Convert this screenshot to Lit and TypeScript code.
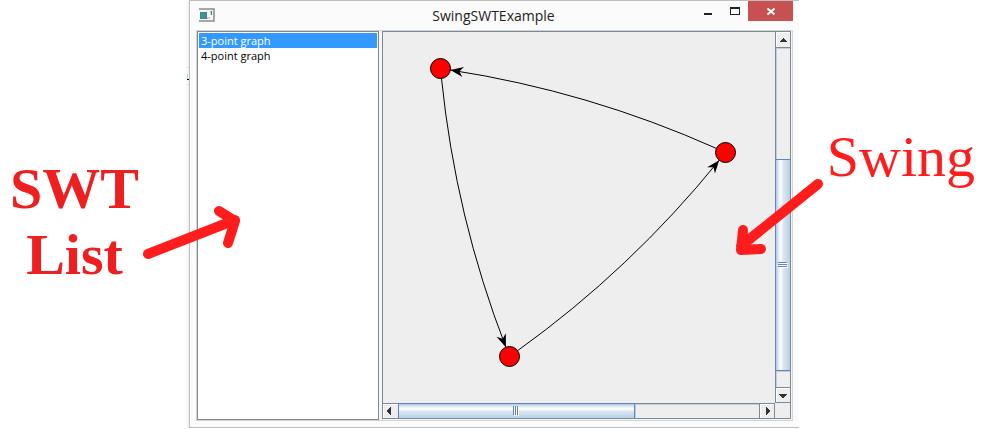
import { LitElement, html, svg, css } from "lit";
import { customElement, property, state } from "lit/decorators.js";

type Point = [number, number];
type Edge = { from: Point; bend: Point; to: Point; angle: number };
type Graph = { name: string; nodes: Point[]; edges: Edge[] };

/** Directed edge between two node rims, bowed to the right of its direction. */
function edge(a: Point, b: Point): Edge {
  const dx = b[0] - a[0];
  const dy = b[1] - a[1];
  const len = Math.hypot(dx, dy);
  const bow = 20;
  const bend: Point = [
    (a[0] + b[0]) / 2 - (dy / len) * bow,
    (a[1] + b[1]) / 2 + (dx / len) * bow,
  ];
  const toward = (p: Point, r: number): Point => {
    const d = Math.hypot(bend[0] - p[0], bend[1] - p[1]);
    return [p[0] + ((bend[0] - p[0]) / d) * r, p[1] + ((bend[1] - p[1]) / d) * r];
  };
  return {
    from: toward(a, 10),
    bend,
    to: toward(b, 10),
    angle: (Math.atan2(b[1] - bend[1], b[0] - bend[0]) * 180) / Math.PI,
  };
}

function ring(name: string, nodes: Point[]): Graph {
  return { name, nodes, edges: nodes.map((n, i) => edge(n, nodes[(i + 1) % nodes.length])) };
}

const graphs: Graph[] = [
  ring("3-point graph", [[57.5, 36.5], [126.5, 324.5], [342.5, 120.5]]),
  ring("4-point graph", [[57.5, 36.5], [126.5, 324.5], [300.5, 300.5], [342.5, 120.5]]),
];

@customElement("scroll-bar")
class ScrollBar extends LitElement {
  @property({ reflect: true }) direction = "vertical";

  static styles = css`
    :host { display: flex; min-width: 0; min-height: 0; background: #eee; }
    :host([direction="vertical"]) { flex-direction: column; border: solid #7a8a99; border-width: 0 0 1px 1px; }
    :host([direction="horizontal"]) { border: solid #7a8a99; border-width: 1px 1px 0 0; }
    .arrow {
      flex: none; width: 14px; height: 14px; padding: 0; border: 0;
      background: #eee; box-shadow: inset 1px 1px #fff; display: block;
    }
    :host([direction="vertical"]) .first { height: 15px; }
    :host([direction="horizontal"]) .first { width: 15px; }
    .arrow svg { display: block; }
    .track { flex: 1; display: flex; min-width: 0; min-height: 0; }
    .vertical { flex-direction: column; border: solid #7a8a99; border-width: 1px 0; box-shadow: inset 1px 1px #b8cfe5; }
    .horizontal { border: solid #7a8a99; border-width: 0 1px; box-shadow: inset 1px 1px #b8cfe5; }
    .thumb { box-sizing: border-box; display: flex; align-items: center; justify-content: center; }
    .vertical .before { flex: 112; }
    .vertical .thumb {
      flex: 211; border: solid #6382bf; border-width: 1px 0 1px 1px; margin-left: -1px;
      background: linear-gradient(90deg, #b8cfe5 0 1px, #dde8f3 2px, #fff 5px, #dde8f3 7px, #b8cfe5);
    }
    .vertical .after { flex: 16; box-shadow: inset 1px 1px #b8cfe5; }
    .horizontal .thumb {
      flex: 236; border: solid #6382bf; border-width: 1px 1px 0 1px; margin: -1px 0 0 -1px;
      background: linear-gradient(#b8cfe5 0 1px, #dde8f3 2px, #fff 5px, #dde8f3 7px, #b8cfe5);
    }
    .horizontal .after { flex: 125; box-shadow: inset 1px 1px #b8cfe5; }
  `;

  render() {
    const vertical = this.direction === "vertical";
    const arrows = vertical
      ? ["M7 5h1v1h1v1h1v1h1v1H4V8h1V7h1V6h1z", "M3 6h8v1h-1v1H9v1H8v1H6V9H5V8H4V7H3z"]
      : ["M8 3v8H7v-1H6V9H5V8H4V6h1V5h1V4h1V3z", "M6 3h1v1h1v1h1v1h1v2H9v1H8v1H7v1H6z"];
    return html`
      <button class="arrow first" aria-label=${vertical ? "Up" : "Left"}>
        <svg width="14" height="14" fill="#333"><path d=${arrows[0]} /></svg>
      </button>
      <div class="track ${this.direction}">
        ${vertical ? html`<div class="before"></div>` : ""}
        <div class="thumb">
          ${vertical
            ? html`<svg width="10" height="6"><path d="M1 1.5h9M1 3.5h9M1 5.5h9" stroke="#fff" /><path d="M0 .5h9M0 2.5h9M0 4.5h9" stroke="#6382bf" /></svg>`
            : html`<svg width="6" height="10"><path d="M1.5 1v9M3.5 1v9M5.5 1v9" stroke="#fff" /><path d="M.5 0v9M2.5 0v9M4.5 0v9" stroke="#6382bf" /></svg>`}
        </div>
        <div class="after"></div>
      </div>
      <button class="arrow" aria-label=${vertical ? "Down" : "Right"}>
        <svg width="14" height="14" fill="#333"><path d=${arrows[1]} /></svg>
      </button>
    `;
  }
}

@customElement("app-root")
class AppRoot extends LitElement {
  @state() private selected = 0;

  static styles = css`
    :host { display: block; background: #fff; font-family: "Open Sans", "Noto Sans", sans-serif; }
    .page { position: relative; display: grid; grid-template-columns: 189px minmax(0, 1fr) 201px; }
    .note {
      font: 58px/66px "Liberation Serif", serif; color: #ff1c1c;
      text-align: center; margin: 0;
    }
    .swt { font-weight: bold; color: #ed1f1f; padding: 156px 40px 0 0; }
    .swing { padding: 124px 0 0 3px; }
    .pointer { position: absolute; top: 0; fill: none; stroke: #ff1c1c; stroke-width: 10; stroke-linecap: round; stroke-linejoin: round; pointer-events: none; }
    .left { left: 139px; }
    .right { right: 171px; }
    .sliver { position: absolute; left: 187px; top: 67px; }
    .window {
      border: solid #bebebe; border-width: 1px 0 1px 1px; background: #fbfbfb;
      padding: 0 6px 6px; box-shadow: -2px 0 2px #f2f2f2;
    }
    .titlebar { display: grid; grid-template-columns: 106px 1fr 108px; height: 29px; }
    .appicon { margin: 7px 0 0 3px; }
    .title { margin: 0; font-size: 14px; font-weight: normal; line-height: 29px; text-align: center; color: #222; }
    .controls { display: flex; justify-content: flex-end; }
    .control { height: 20px; width: 27px; padding: 0; border: 0; background: none; }
    .control svg { display: block; }
    .close { width: 45px; background: #c75050; }
    .body {
      display: grid; grid-template-columns: 182px minmax(0, 1fr); gap: 3px;
      border: 1px solid #d4d4d4; background: #f5f5f5;
    }
    .list {
      appearance: none; box-sizing: border-box; width: 100%; height: 100%; margin: 0; padding: 1px;
      border: 1px solid #828790; border-radius: 0; background: #fff; outline: 0; overflow: hidden;
      font: 11px/15px "Open Sans", sans-serif; color: #000;
    }
    .list option { padding: 0 2px; height: 15px; min-height: 15px; line-height: 15px; }
    .list option:checked { background: #39f linear-gradient(#39f, #39f); color: #fff; }
    .swingpane {
      display: grid; grid-template: auto 15px / minmax(0, 1fr) 15px;
      border: 1px solid #7a8a99; background: #eee; margin: 0 1px 1px 0;
    }
    .canvas { display: block; width: 100%; height: 371px; }
    .edge { fill: none; stroke: #000; }
    .node { fill: #f00; stroke: #000; }
  `;

  private pick(e: Event) {
    this.selected = (e.target as HTMLSelectElement).selectedIndex;
  }

  private drawGraph(g: Graph) {
    return svg`
      ${g.edges.map(
        (e) => svg`
          <path class="edge" d="M${e.from.join(" ")}Q${e.bend.join(" ")} ${e.to.join(" ")}" />
          <path d="M0 0L-13 5L-9 0L-13 -5Z" transform="translate(${e.to.join(" ")}) rotate(${e.angle})" />`
      )}
      ${g.nodes.map((n) => svg`<circle class="node" cx=${n[0]} cy=${n[1]} r="10" />`)}
    `;
  }

  render() {
    return html`
      <div class="page">
        <p class="note swt">SWT<br />List</p>
        <main class="window">
          <header class="titlebar">
            <svg class="appicon" width="17" height="15">
              <path d="M0 1h15v12H0" fill="#f4f4f4" stroke="#8a8a8a" stroke-width="1.500" />
              <path d="M1 4h7v7H1z" fill="#4a7fa0" /><path d="M2 5h4v5H2z" fill="#3a9a80" />
              <path d="M8 9h3v2H8z" fill="#ccc" /><path d="M11.500 3h1.500v4h-1z" fill="#3d7f8c" />
            </svg>
            <h1 class="title">SwingSWTExample</h1>
            <div class="controls">
              <button class="control" aria-label="Minimize">
                <svg width="27" height="20"><path d="M10 12h8v2h-8z" fill="#222" /></svg>
              </button>
              <button class="control" aria-label="Maximize">
                <svg width="27" height="20"><path d="M9 6h10v8H9zM10 8v5h8V8z" fill="#222" fill-rule="evenodd" /></svg>
              </button>
              <button class="control close" aria-label="Close">
                <svg width="45" height="20"><path d="M19.500 7.500l7 6M26.500 7.500l-7 6" stroke="#fff" stroke-width="2" /></svg>
              </button>
            </div>
          </header>
          <div class="body">
            <select class="list" size="4" aria-label="Graphs" @change=${this.pick}>
              ${graphs.map((g, i) => html`<option ?selected=${i === this.selected}>${g.name}</option>`)}
            </select>
            <section class="swingpane">
              <svg class="canvas" viewBox="0 0 392 371" preserveAspectRatio="xMinYMin meet">
                ${this.drawGraph(graphs[this.selected])}
              </svg>
              <scroll-bar direction="vertical"></scroll-bar>
              <scroll-bar direction="horizontal"></scroll-bar>
            </section>
          </div>
        </main>
        <p class="note swing">Swing</p>
        <svg class="sliver" width="2" height="18">
          <path d="M0 .5h2M0 17.500h2" stroke="#ddd" /><path d="M0 7h1v5H0z" fill="#9fdcf0" /><path d="M0 12h2v1H0z" />
        </svg>
        <svg class="pointer left" width="110" height="290">
          <path d="M9 254L96 220M80 211L96 221L89 243" />
        </svg>
        <svg class="pointer right" width="100" height="290">
          <path d="M89 184L12 246M14 230L12 250L32 249" />
        </svg>
      </div>
    `;
  }
}
